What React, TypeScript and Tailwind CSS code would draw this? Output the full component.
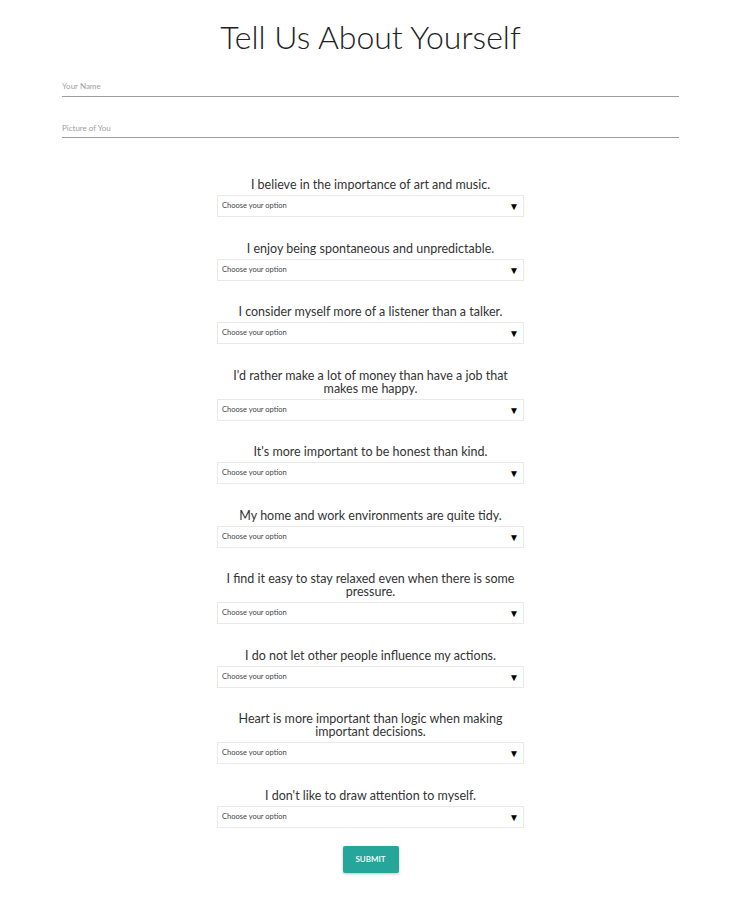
import { ReactNode } from 'react'

const questions: ReactNode[] = [
	'I believe in the importance of art and music.',
	'I enjoy being spontaneous and unpredictable.',
	'I consider myself more of a listener than a talker.',
	<>
		I'd rather make a lot of money than have a job that
		<br />
		makes me happy.
	</>,
	"It's more important to be honest than kind.",
	'My home and work environments are quite tidy.',
	<>
		I find it easy to stay relaxed even when there is some
		<br />
		pressure.
	</>,
	'I do not let other people influence my actions.',
	<>
		Heart is more important than logic when making
		<br />
		important decisions.
	</>,
	"I don't like to draw attention to myself.",
]

function Question({ text }: { text: ReactNode }) {
	return (
		<div className="w-[307px] mb-[24.5px]">
			<p className="text-center whitespace-nowrap text-[12.5px] leading-[13px] text-[#333]">{text}</p>
			<div className="mt-[4px] h-[22px] border border-[#e9e9e9] bg-white flex items-center justify-between pl-[4px] pr-[4px]">
				<span className="text-[7.5px] leading-none text-[#444]">Choose your option</span>
				<span className="text-[10px] leading-none text-black">▼</span>
			</div>
		</div>
	)
}

export default function App() {
	return (
		<div className="min-h-screen bg-white font-['Lato','Open_Sans',sans-serif] pt-[15px]">
			<h1 className="text-center text-[32px] leading-[44px] font-light text-[#222]">Tell Us About Yourself</h1>

			<div className="px-[62px]">
				<div className="mt-[19px] h-[19px] border-b border-[#9e9e9e] pt-[3px] text-[8px] leading-[10px] text-[#9e9e9e]">
					Your Name
				</div>
				<div className="mt-[23px] h-[18px] border-b border-[#9e9e9e] pt-[3px] text-[8px] leading-[10px] text-[#9e9e9e]">
					Picture of You
				</div>
			</div>

			<div className="mt-[40px] flex flex-col items-center">
				{questions.map((q, i) => (
					<Question key={i} text={q} />
				))}
				<button className="-mt-[6.5px] w-[56px] h-[27px] bg-[#26a69a] text-white text-[8px] leading-none font-semibold rounded-[2px] shadow-[0_1px_3px_rgba(0,0,0,0.25)]">
					SUBMIT
				</button>
			</div>
		</div>
	)
}
